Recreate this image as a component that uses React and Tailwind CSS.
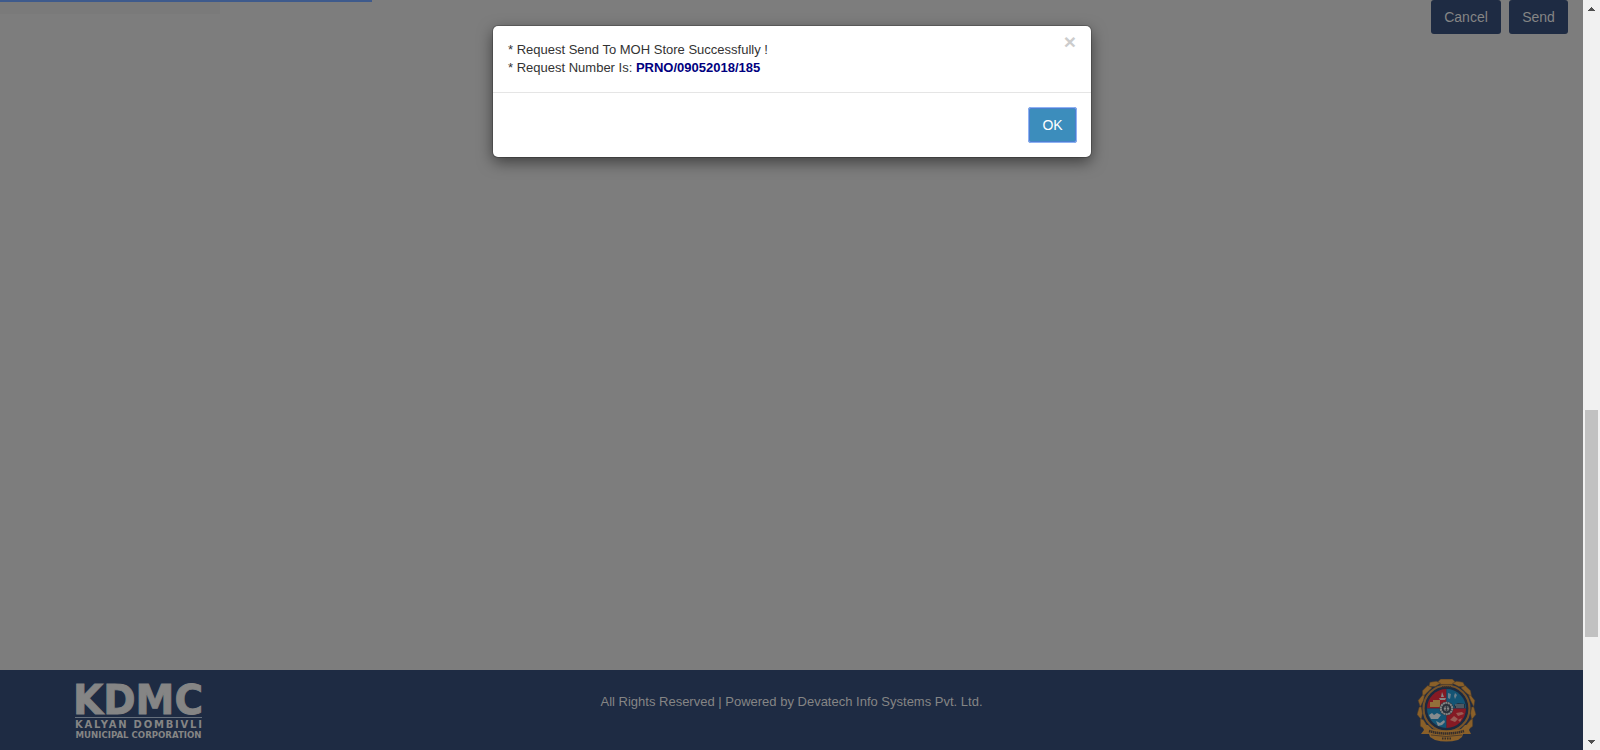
const garland = [
  "M24 2l11 0 3 3-3 2h-11l-3-2z",
  "M20 4l-6 1-1 4 6 0 5-3z",
  "M39 4l6 1 2 4-6 0-6-3z",
  "M12 8l-5 5 0 6 4-4 5-5z",
  "M47 8l5 5 1 6-5-4-5-5z",
  "M7 17l-4 5 2 6 3-6 1-5z",
  "M52 17l4 5-1 6-3-6-2-5z",
  "M4 28l-2 7 4 5 1-6-1-6z",
  "M55 28l2 7-4 5-1-6 1-6z",
  "M5 39l0 7 6 4 0-5-3-5z",
  "M54 39l0 7-5 4-1-5 4-5z",
];

function Emblem() {
  return (
    <svg width="60" height="64" viewBox="0 0 60 64" role="img" aria-label="Municipal emblem">
      <circle cx="29.5" cy="29.5" r="23" fill="none" stroke="#765329" strokeWidth="2.200" />
      <g transform="translate(29.5 29.5) scale(1.07) translate(-29.5 -29.5)">
        {garland.map((d) => (
          <path key={d} d={d} fill="#8a6029" stroke="#4b3a29" strokeWidth=".5" />
        ))}
      </g>
      <circle cx="29.5" cy="29.5" r="21.500" fill="#1c2a3f" />
      <path d="M29.500 29.500V10A19.500 19.500 0 0 0 10 29.500z" fill="#851a24" />
      <path d="M29.500 29.500V10A19.500 19.500 0 0 1 49 29.500z" fill="#145474" />
      <path d="M29.500 29.500H10A19.500 19.500 0 0 0 29.500 49z" fill="#145474" />
      <path d="M29.500 29.500H49A19.500 19.500 0 0 1 29.500 49z" fill="#851a24" />
      <path d="M25 8h9" stroke="#362e2b" strokeWidth="1.500" strokeDasharray="1.500 .5" />
      <path d="M13 23h3v-2h7v7H13zM21 21h2v7h-2z" fill="#92703a" />
      <path d="M25 13l2 5h-3zM22 19h7l-1 2h-5z" fill="#858585" />
      <path d="M31 14l3 1-1 5-2-1zM38 14l2 2-2 4-1-3z" fill="#6c7f8b" />
      <path d="M37 26l4-2 7 1v4H38z" fill="#22313e" />
      <path d="M38 26h9M39 28h8" stroke="#788086" />
      <path d="M12 36l3-2 2 2 3-2 4 2-3 4h-7z" fill="#868b8e" />
      <path d="M19 42l4 2 4-3 1 2-3 3-4 1z" fill="#828a8f" />
      <path d="M39 34l6-1 2 2-6 2zM33 41l4-4 4 3-3 3zM41 41l4-2-2 4z" fill="#985b54" />
      <circle cx="29.500" cy="29.500" r="7" fill="#29303a" />
      <circle cx="29.500" cy="29.500" r="5.700" fill="none" stroke="#858585" strokeWidth="2" strokeDasharray="2 .5" />
      <circle cx="29.500" cy="29.500" r="2.700" fill="#858585" />
      <path d="M27 28h5M29.500 26v6M27.500 31h4" stroke="#29303a" strokeWidth=".8" />
      <path d="M5 46l6 0 4 4q14 3 29 0l4-4 6 0-2 5 2 4-8 0-1 3-4 3q-12 3-23 0l-5-3-1-3H4l3-4z" fill="#8a6029" />
      <path d="M12 52q17 5 35 0" fill="none" stroke="#362e2b" strokeWidth="2.500" strokeDasharray="1.500 .5" />
      <path d="M14 56q15 3 31 0" fill="none" stroke="#362e2b" strokeWidth=".7" />
      <path d="M25 59.500h10" stroke="#362e2b" strokeWidth="2" strokeDasharray="1.500 1" />
    </svg>
  );
}

function Wordmark() {
  return (
    <svg width="140" height="74" viewBox="0 -8 140 74" fill="#858585" className="font-['DejaVu_Sans',sans-serif] font-bold">
      <text x="3" y="35" fontSize="40.500" textLength="130" lengthAdjust="spacingAndGlyphs" stroke="#858585" strokeWidth=".9">
        KDMC
      </text>
      <path d="M5 38.500h127" stroke="#66707d" />
      <text x="5" y="49" fontSize="10" textLength="127" lengthAdjust="spacing">KALYAN DOMBIVLI</text>
      <text x="5.500" y="59" fontSize="8" textLength="126" lengthAdjust="spacingAndGlyphs">MUNICIPAL CORPORATION</text>
    </svg>
  );
}

function Scrollbar() {
  return (
    <div className="flex w-[17px] flex-col items-center bg-[#f1f1f1]">
      <svg width="17" height="17" viewBox="0 0 17 17" shapeRendering="crispEdges">
        <path d="M5 11h7l-3-4h-1z" fill="#505050" />
      </svg>
      <div className="mt-[393px] h-[227px] w-[13px] bg-[#c1c1c1]" />
      <svg width="17" height="17" viewBox="0 0 17 17" shapeRendering="crispEdges" className="mt-auto">
        <path d="M5 7h7l-3 4h-1z" fill="#505050" />
      </svg>
    </div>
  );
}

function Dialog() {
  return (
    <div
      role="dialog"
      className="absolute top-[26px] left-[493px] flex w-[598px] flex-col rounded-[5px] bg-white shadow-[0_5px_15px_rgba(0,0,0,0.5),0_0_0_1px_rgba(0,0,0,0.2)]"
    >
      <div className="flex h-[66px] items-start justify-between pt-[15px] pr-[15px] pl-[15px]">
        <p className="text-[13px] leading-[18px] whitespace-nowrap text-[#333]">
          * Request Send To MOH Store Successfully !
          <br />
          * Request Number Is: <b className="text-[#000080]">PRNO/09052018/185</b>
        </p>
        <button className="-mt-[10px] text-[21px] leading-[21px] font-bold text-[#ccc]">×</button>
      </div>
      <div className="flex h-[65px] justify-end border-t border-[#e5e5e5] pt-[14px] pr-[14px]">
        <button className="h-[36px] w-[49px] rounded-[3px] border-2 border-[#4b7fce] bg-[#3c8dbc] text-sm text-white outline outline-1 -outline-offset-1 outline-[#8eb2f3]">
          OK
        </button>
      </div>
    </div>
  );
}

export default function App() {
  return (
    <div className="relative flex h-[750px] w-[1600px] overflow-hidden font-['Liberation_Sans',Arial,sans-serif]">
      <div className="flex flex-1 flex-col bg-[#7d7d7d]">
        <main className="flex flex-1 items-start justify-between pr-[15px]">
          <div className="w-[372px] border-t-2 border-[#3e5a8c]">
            <div className="h-3 w-[220px] bg-[#7a7a7a]" />
          </div>
          <div className="flex gap-2 text-sm text-[#858585]">
            <button className="h-[34px] w-[70px] rounded-[3px] bg-[#1e2b43]">Cancel</button>
            <button className="h-[34px] w-[59px] rounded-[3px] bg-[#1e2b43]">Send</button>
          </div>
        </main>
        <footer className="grid h-20 grid-cols-[1fr_auto_1fr] items-start bg-[#1e2b43] pr-[106px] pl-[70px]">
          <div className="flex pt-px">
            <Wordmark />
          </div>
          <p className="pt-[22px] pl-9 text-[13px] leading-[19px] whitespace-nowrap text-[#858585]">
            All Rights Reserved | Powered by Devatech Info Systems Pvt. Ltd.
          </p>
          <div className="flex justify-end pt-[9px]">
            <Emblem />
          </div>
        </footer>
      </div>
      <Scrollbar />
      <Dialog />
    </div>
  );
}
